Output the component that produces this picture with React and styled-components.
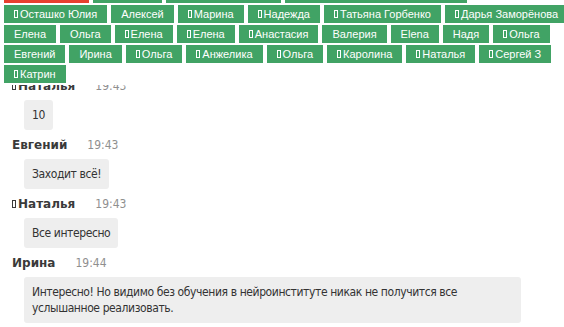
import React from 'react';
import styled, { createGlobalStyle } from 'styled-components';

const Global = createGlobalStyle`
  html, body {
    margin: 0;
    padding: 0;
    background: #fff;
  }
  body {
    font-family: "DejaVu Sans Condensed", "DejaVu Sans", sans-serif;
  }
`;

const Page = styled.div`
  position: relative;
  width: 564px;
  height: 327px;
  overflow: hidden;
  background: #fff;
`;

// name cloud lies over the chat, which is scrolled under it
const TagPanel = styled.div`
  position: absolute;
  top: -15px;
  left: 0;
  right: 0;
  z-index: 1;
  background: #fff;
  padding: 0 0 2px 4px;
  display: flex;
  flex-direction: column;
  gap: 2px;
`;

const TagRow = styled.div`
  display: flex;
  gap: 4px;
`;

const Tag = styled.span`
  display: inline-flex;
  align-items: center;
  justify-content: center;
  box-sizing: border-box;
  height: 18px;
  padding: 0 10px;
  width: ${p => (p.$w ? p.$w + 'px' : 'auto')};
  background: ${p => (p.$red ? '#e8402f' : '#41a365')};
  color: #fff;
  font-family: "Liberation Sans", Arial, sans-serif;
  font-size: 11px;
  white-space: nowrap;
`;

const Tofu = styled.span`
  display: inline-block;
  box-sizing: border-box;
  width: 4px;
  height: 8px;
  border: 1px solid currentColor;
  margin-right: 2px;
  margin-top: -1px;
`;

const Chat = styled.div`
  padding: 78px 0 0 12px;
`;

const Message = styled.div`
  margin-bottom: 7px;
`;

const Header = styled.div`
  display: flex;
  align-items: center;
  height: 16px;
  line-height: 16px;
  font-size: 12px;
`;

const Name = styled.span`
  display: inline-flex;
  align-items: center;
  font-family: "DejaVu Sans", sans-serif;
  font-weight: bold;
  color: #3a3a3a;
`;

const Time = styled.span`
  margin-left: 20px;
  color: #8f8f8f;
`;

const Bubble = styled.div`
  display: inline-block;
  margin: 6px 0 0 12px;
  padding: 7px 8px;
  width: ${p => (p.$wide ? '481px' : 'auto')};
  background: #eeeeee;
  border-radius: 3px;
  color: #333;
  font-size: 12px;
  line-height: 16px;
  letter-spacing: -0.4px;
`;

const rows = [
  [
    { t: '', red: true, w: 85 },
    { t: '', w: 69 },
    { t: '', w: 115 },
    { t: '', w: 182 },
  ],
  [
    { t: 'Осташко Юлия', tofu: true },
    { t: 'Алексей' },
    { t: 'Марина', tofu: true },
    { t: 'Надежда', tofu: true },
    { t: 'Татьяна Горбенко', tofu: true },
    { t: 'Дарья Заморёнова', tofu: true },
  ],
  [
    { t: 'Елена' },
    { t: 'Ольга' },
    { t: 'Елена', tofu: true },
    { t: 'Елена', tofu: true },
    { t: 'Анастасия', tofu: true },
    { t: 'Валерия' },
    { t: 'Elena' },
    { t: 'Надя' },
    { t: 'Ольга', tofu: true },
  ],
  [
    { t: 'Евгений' },
    { t: 'Ирина' },
    { t: 'Ольга', tofu: true },
    { t: 'Анжелика', tofu: true },
    { t: 'Ольга', tofu: true },
    { t: 'Каролина', tofu: true },
    { t: 'Наталья', tofu: true },
    { t: 'Сергей З', tofu: true },
  ],
  [{ t: 'Катрин', tofu: true }],
];

const messages = [
  { name: 'Наталья', tofu: true, time: '19:43', text: '10' },
  { name: 'Евгений', time: '19:43', text: 'Заходит всё!' },
  { name: 'Наталья', tofu: true, time: '19:43', text: 'Все интересно' },
  {
    name: 'Ирина',
    time: '19:44',
    text: 'Интересно! Но видимо без обучения в нейроинституте никак не получится все услышанное реализовать.',
    wide: true,
  },
];

export default function App() {
  return (
    <Page>
      <Global />
      <TagPanel>
        {rows.map((row, i) => (
          <TagRow key={i}>
            {row.map((tag, j) => (
              <Tag key={j} $red={tag.red} $w={tag.w}>
                {tag.tofu && <Tofu />}
                {tag.t}
              </Tag>
            ))}
          </TagRow>
        ))}
      </TagPanel>
      <Chat>
        {messages.map((m, i) => (
          <Message key={i}>
            <Header>
              <Name>
                {m.tofu && <Tofu />}
                {m.name}
              </Name>
              <Time>{m.time}</Time>
            </Header>
            <Bubble $wide={m.wide}>{m.text}</Bubble>
          </Message>
        ))}
      </Chat>
    </Page>
  );
}
